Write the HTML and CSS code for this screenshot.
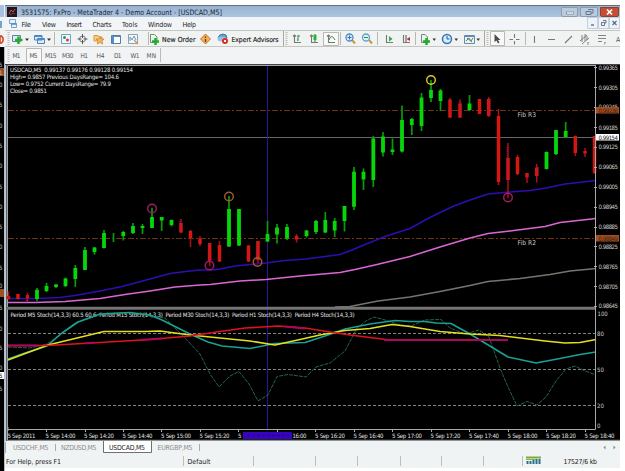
FILE: index.html
```html
<!DOCTYPE html>
<html lang="en">
<head>
<meta charset="utf-8">
<title>MetaTrader 4</title>
<link rel="stylesheet" href="styles.css">
</head>
<body>
<div class="screen">
  <div class="behind">
    <div class="behind-tools"><svg width="5" height="42" viewBox="0 5 5 42"><path d="M0 5H4V17H0" fill="#a9c1df"/><path d="M0 21H2V28H0" fill="#7d9fc4"/><path d="M0 36H1.500L3 38V41L1.500 43H0Z" fill="none" stroke="#d8391c" stroke-width="1.500"/></svg></div>
    <svg class="behind-chart" width="5" height="424" viewBox="0 47 5 424">
      <rect x="0" y="68" width="4" height="8" fill="#a14f22"/><rect x="0" y="289" width="4" height="8" fill="#a14f22"/><rect x="0" y="372" width="4" height="7" fill="#fff"/>
      <g class="behind-digits"><text y="67">5</text><text y="75">1</text><text y="87">0</text><text y="107">5</text><text y="128">0</text><text y="148">5</text><text y="168">0</text><text y="189">5</text><text y="209">0</text><text y="229">5</text><text y="249">0</text><text y="270">5</text><text y="288">0</text><text y="310">5</text><text y="331">0</text><text y="350">5</text><text y="370">0</text><text y="391">5</text></g>
      <text class="behind-now" y="378">5</text>
    </svg>
  </div>
  <div class="window">
    <header class="titlebar">
      <svg class="app-icon" width="10" height="10" viewBox="0 0 10 10"><rect width="10" height="10" fill="#26131d"/><path d="M2 7L4 3L6 5L8 2" stroke="#bd5a38" fill="none"/><path d="M3 8L6 6L8 7" stroke="#704052" fill="none"/></svg>
      <svg class="title-text" width="210" height="12"><text x="0" y="9" textLength="201" lengthAdjust="spacingAndGlyphs">3531575: FxPro - MetaTrader 4 - Demo Account - [USDCAD,M5]</text></svg>
      <div class="win-buttons"><span class="wb"><svg width="15" height="8"><rect x="4.500" y="4" width="7" height="2" fill="#fff" stroke="#66758c" stroke-width=".6"/></svg></span><span class="wb"><svg width="16" height="8"><path d="M7 1.500H12V5H10M5 3.500H10V6.500H5Z" fill="none" stroke="#68778c"/></svg></span><span class="wb close"><svg width="17" height="8"><path d="M6 1.500L11 6.500M11 1.500L6 6.500" stroke="#fff" stroke-width="1.700"/></svg></span></div>
    </header>
    <nav class="menubar">
      <svg width="582" height="13" viewBox="5 17 582 13">
        <path d="M9.500 19.500H15.500V23.500H9.500ZM11.500 23.500H16.500V27.500H11.500Z" fill="#e6f1fb" stroke="#7ba0c5"/><path d="M11 24H16.500" stroke="#5589bd" stroke-width="1.500"/>
        <g class="menu-text"><text x="21.500" y="26.500" textLength="9.500">File</text><text x="42" y="26.500" textLength="14">View</text><text x="66.500" y="26.500" textLength="15.500">Insert</text><text x="92.500" y="26.500" textLength="19">Charts</text><text x="122" y="26.500" textLength="15.500">Tools</text><text x="148" y="26.500" textLength="24">Window</text><text x="182.500" y="26.500" textLength="13.500">Help</text></g>
      </svg>
      <div class="mdi-buttons"><span class="mdi"><svg width="9" height="10"><path d="M3 7H6" stroke="#56677d" stroke-width="1.300"/></svg></span><span class="mdi"><svg width="9" height="10"><path d="M4 2.500H7V5H6M2.500 4.500H5.500V7.500H2.500Z" fill="none" stroke="#56677d" stroke-width=".9"/></svg></span><span class="mdi"><svg width="9" height="10"><path d="M2.500 3L6.500 7M6.500 3L2.500 7" stroke="#56677d" stroke-width="1.100"/></svg></span></div>
    </nav>
    <div class="toolbar">
      <svg width="615" height="17" viewBox="5 30 615 17">
        <path d="M8.500 32V45M286.500 32V45M487.500 32V45" stroke="#bdbdb9" stroke-width="2" stroke-dasharray="1 1"/>
        <path d="M54.500 32V45M148.500 32V45M340.500 32V45M377.500 32V45M415.500 32V45M525.500 32V45" stroke="#b7b7b3"/>
        <path d="M283.500 31V46M484.500 31V46" stroke="#aba99f"/>
        <path d="M323.500 45.500V32.500H338.500V45.500ZM490.500 45.500V31.500H504.500V45.500Z" fill="#f9f9f7" stroke="#b9b9b5"/>
        <path d="M12.500 35.500H20.500V41.500H12.500Z" fill="#dfebf6" stroke="#5e83ab"/><path d="M18.500 36.500V44M15 40H22.500" stroke="#22ac2b" stroke-width="2.500"/>
        <path d="M25 38.500H29L27 41ZM47 38.500H51L49 41ZM432.500 38.500H436L434.200 41ZM454.500 38.500H458L456.200 41ZM476.500 38.500H480L478.200 41Z" fill="#333"/>
        <path d="M34.500 35.500H42V40H34.500ZM37.500 38.500H44.500V43.500H37.500Z" fill="#dceafa" stroke="#4b84be"/><path d="M35 36.500H42M38 39.500H45" stroke="#4e8dcb"/>
        <path d="M61.500 34.500H70.500V43.500H61.500Z" fill="#edf6fb" stroke="#6ea1c8"/><circle cx="64.500" cy="37.500" r="1.500" fill="#2aa239"/><circle cx="67.500" cy="40" r="1.500" fill="#df3835"/>
        <circle cx="82.500" cy="39" r="3" fill="none" stroke="#777"/><path d="M82.500 34V38M82.500 40V44M77.500 39H81.500M83.500 39H87.500" stroke="#555"/>
        <path d="M94 35.500H98L99 37H102V41H94Z" fill="#f7cf7b" stroke="#d39a42"/><path d="M100 36.500L101.200 39H104L102 41L102.700 44L100 42.500L97.300 44L98 41L96 39H98.800Z" fill="#f7b35a" stroke="#c8812c" stroke-width=".7"/>
        <path d="M111.500 35.500H120.500V43.500H111.500Z" fill="#fff" stroke="#4e7eb2"/><path d="M112 36H120V37H112ZM112 37H114V43H112Z" fill="#5590cb"/>
        <path d="M128.500 34.500H137.500V43.500H128.500Z" fill="#f5f9fb" stroke="#86a3b9"/><path d="M130 41V37L132 40L134 36L136 40" fill="none" stroke="#7496ae"/><path d="M134 40L138 44" stroke="#c6a053" stroke-width="1.500"/>
        <path d="M150.500 34.500H154.500L157 37V42.500H150.500Z" fill="#eef3ee" stroke="#6f9170"/><path d="M155.500 38V45M152 41.500H159" stroke="#20ae2b" stroke-width="2.500"/>
        <path d="M205.500 34L210.500 39L205.500 44L200.500 39Z" fill="#f6ae5a" stroke="#c87926"/><path d="M205.500 36.500V38M205.500 39V42" stroke="#54401f" stroke-width="1.300"/>
        <path d="M218 38Q219 34 223 34Q227 34 227 38L223 41Z" fill="#5f9fd0" stroke="#437dad"/><ellipse cx="222" cy="39" rx="4.500" ry="2.500" fill="#94c1dd"/><circle cx="225" cy="41" r="3" fill="#dd2e20"/><path d="M224 40H226V42H224Z" fill="#fff"/>
        <g class="tool-text"><text x="162" y="41.500" textLength="33.500">New Order</text><text x="231.500" y="41.500" textLength="47">Expert Advisors</text></g>
        <g fill="none" stroke="#777" stroke-width="1.100"><path d="M294.500 35V42.500H301M311.500 35V42.500H318M328.500 35V42.500H335M386.500 35V42.500H393M403.500 35V42.500H410"/><path d="M293 36.500L294.500 35L296 36.500M310 36.500L311.500 35L313 36.500M327 36.500L328.500 35L330 36.500"/></g>
        <path d="M298 35V41M297 40H298M298 36H300" stroke="#318b42"/><path d="M315 34V42" stroke="#227e28"/><rect x="313.500" y="35" width="3" height="5" fill="#26b536"/><path d="M329 40Q331.500 33 335 40" fill="none" stroke="#41824d"/>
        <path d="M389 36L392.500 39L389 41.500Z" fill="#31a84a"/><path d="M406 35V42" stroke="#456"/><path d="M410 37L406.500 39L410 41Z" fill="#c22d27"/>
        <path d="M352 40L355 43.500M369 40L372 43.500" stroke="#c89a40" stroke-width="2"/><circle cx="349.500" cy="37.500" r="3.500" fill="#dcefff" stroke="#5089c3" stroke-width="1.300"/><circle cx="366" cy="37.500" r="3.500" fill="#dcefff" stroke="#68a0c0" stroke-width="1.300"/><path d="M347.500 37.500H351.500M349.500 35.500V39.500" stroke="#376fae"/><path d="M364 37.500H368" stroke="#22974a"/>
        <path d="M421.500 34.500H425L427.500 37V42.500H421.500Z" fill="#eef3f0" stroke="#6c8c75"/><path d="M426.500 38V45M423 41.500H430" stroke="#20aa2c" stroke-width="2.500"/>
        <circle cx="447" cy="39" r="4.500" fill="#d8ecff" stroke="#3475b4" stroke-width="1.500"/><path d="M447 36V39H449.500" fill="none" stroke="#235a91"/>
        <path d="M464.500 35.500H474.500V43.500H464.500Z" fill="#e7f2fa" stroke="#648daf"/><path d="M465 36.500H474" stroke="#568ac0"/><path d="M466 41L469 38L471 41L473 38" fill="none" stroke="#349b52"/><path d="M467 38L472 42" stroke="#ca6349"/>
        <path d="M494.500 34V42L496.500 40.500L498 43.500L499.500 42.500L498 40H500.500Z" fill="#4c4c50"/>
        <g fill="none" stroke="#777" stroke-width="1.100"><path d="M514.500 34V38M514.500 41V44.500M509.500 39.500H513M516 39.500H519.500M534.500 36V43M548 39.500H555M565 43L572 36"/><path d="M580 41L587 35M582 44L589 38M582 35V42M585 34V41M587 36V40M598 35.500H606M598 38.500H606M598 41.500H602" stroke-width=".9"/></g>
        <g class="glyph"><text x="587" y="45">E</text><text x="604" y="45">F</text></g><text class="letter-tool" x="616" y="42">A</text>
      </svg>
    </div>
    <div class="timeframes">
      <svg width="615" height="17" viewBox="5 47 615 17"><path d="M8.500 49V62" stroke="#c1c1be" stroke-width="2" stroke-dasharray="1 1"/><path d="M26.500 62V48.500H41.500V62" fill="#f8f8f6" stroke="#b7b7b3"/><path d="M160.500 48V62" stroke="#bbb"/>
      <g><text x="12.500" y="57.500" textLength="8">M1</text><text x="29.500" y="57.500" textLength="8">M5</text><text x="45" y="57.500" textLength="11.500">M15</text><text x="62" y="57.500" textLength="11.500">M30</text><text x="80.500" y="57.500" textLength="7.500">H1</text><text x="96.500" y="57.500" textLength="8">H4</text><text x="114" y="57.500" textLength="7.500">D1</text><text x="130.500" y="57.500" textLength="9">W1</text><text x="146.500" y="57.500" textLength="9.500">MN</text></g></svg>
    </div>
    <main class="chart">
      <svg width="615" height="377" viewBox="5 64 615 377">
        <rect x="5" y="64" width="615" height="377" fill="#000"/>
        <path d="M5.500 64V441" stroke="#b7c5d3" stroke-width="2"/><path d="M5 64H620" stroke="#464249" stroke-width="2"/><path d="M7.500 440V65.500H595.500" fill="none" stroke="#a4a4a4"/>
        <path d="M8 110.500H595M8 238.500H595" stroke="#6b3415" stroke-dasharray="6 2 2 2"/><path d="M8 137.500H595" stroke="#66666e"/>
        <path d="M267.500 66V307M267.500 310V429" stroke="#2b139c"/>
        <g fill="none" stroke-width="1.500" stroke-linejoin="round">
          <path stroke="#2f0db4" d="M8 298.500H37L60 297.500L75 295.500L100 291L122 286.500L150 279L170 273.500L190 271L200 270H213L220 269L235 266L266 263L285 260.500L306 259L340 254.500L352 250L365 244.500L385 236.500L410 228.500L427 219L440 212.500L455 205.500L470 200L488 194L510 192L530 190.500L546 188L565 184L596 180.500"/>
          <path stroke="#d967d5" d="M8 302.500H35L65 301.500L100 298.500L125 294.500L150 291L175 287L200 285L210 284.500L240 281L266 279.500L300 276L340 272.500L355 269.500L377 264.500L410 256.500L440 247L470 238L488 233.500L510 231L545 226.500L560 222.500L596 218.500"/>
          <path stroke="#75756e" d="M335 307L350 306.500L378 301L410 297L440 291.500L470 285.500L488 281.500L520 278.500L550 274.500L570 271L596 268.500"/>
        </g>
        <path class="up-wick" d="M37 288V301M46.500 283V292M56 284V288M65.500 277.500V287M75.300 265V287M85 247V270M94.500 247V254.700M104 230V248.500M113.500 233V242M123.300 231V240.500M133 223V234M142.500 224V234M152 208V228M161.700 217V231M171.500 219.500V226.500M229 196V247M239 209V246M267.500 221V242M277 224V243.500M287 224V240M306.500 230V237.500M316 220V234M325.300 212V233M334.700 218V237M344.500 206V231.500M354 167V210M363.500 168.500V190M373.300 136V187M383 132V156.500M392.500 138.500V155M402 105.500V152.500M411.800 118V135M421.500 93V131M431 80V102M440.500 89V111M469.500 95V111M546.500 151.500V169.500M556 130V155M565.700 122V138"/>
        <path class="up-body" d="M37 289.700V299M46.500 286V291M56 284.500V287M65.500 278.500V286M75.300 268V279M85 250V270M94.500 247.500V252M104 233V248M123.300 232V236M133 226V233M142.500 226V228M152 217V228M161.700 217V220.500M171.500 220V225M229 209V246.500M239 209V245.500M267.500 234V241.500M277 227.500V234.500M287 227V238.500M306.500 230.500V236M316 221V232M325.300 220V232.500M334.700 221V230.500M344.500 206V221M354 171.700V206.700M363.500 171.700V179.500M373.300 138.500V180M383 136.500V152.500M392.500 149.500V152M402 120V151.500M411.800 119V125M421.500 97.500V126M431 90V98M440.500 90.500V101M469.500 103.500V110M546.500 152V169M556 130V154M565.700 131V137"/>
        <path class="down-wick" d="M8.500 291.500V300M18 294V299.500M27.500 293V302M181 219V233M190.500 230V247M200 236V246M209.700 243V266M219.500 241V262M248.500 245V262M258 241V263M296.500 234V242.500M450 98V118M460 99.500V118M479.500 99V114M488.700 97V117M498.500 109V185M508 143V198M517.500 155V175M527 173V183M536.700 164V182.500M575.300 135.500V156M585 148V157M594.500 136V174"/>
        <path class="down-body" d="M8.500 296V299M18 294V299M27.500 295V298M181 223V232.500M190.500 231V238M200 238.500V244M209.700 243V260.500M219.500 245V261.500M248.500 245.500V261.500M258 241V260M296.500 236V239.500M450 99.500V117.500M460 103.500V117.500M479.500 99V114M488.700 99V116M498.500 116V182M508 158V180M517.500 157V174M527 173V177.500M536.700 167.500V176M575.300 136V153M585 151V153.500M594.500 136V173"/>
        <path d="M26.500 296V301M208.300 244V261M256.500 242V259M179.800 221V230M461 102V114M490 99V115M507 147V181M538 167V176" stroke="#a91362" stroke-dasharray="1 1"/>
        <g fill="none" stroke-width="1.400"><circle cx="152" cy="208.500" r="4.300" stroke="#a91964"/><circle cx="209.500" cy="265.500" r="4.300" stroke="#a91964"/><circle cx="508" cy="197.500" r="4.300" stroke="#a91964"/><circle cx="229" cy="196.500" r="4.300" stroke="#a65a24"/><circle cx="257.500" cy="262" r="4.300" stroke="#a65a24"/><circle cx="431" cy="80" r="4.300" stroke="#e2ce16"/></g>
        <g class="chart-text"><text x="10" y="72" textLength="123">USDCAD,M5&#160; 0.99137 0.99176 0.99128 0.99154</text><text x="10" y="78.500" textLength="109">High= 0.9857 Previous DaysRange= 104.6</text><text x="10" y="85.500" textLength="101">Low= 0.9752 Current DaysRange= 79.9</text><text x="10" y="92.500" textLength="37">Close= 0.9851</text></g>
        <g class="fib"><text x="517.500" y="116.800" textLength="18.500">Fib R3</text><text x="517.500" y="244.800" textLength="18.500">Fib R2</text></g>
        <path d="M8 333.500H595M8 369.500H595M8 405.500H595" stroke="#84847e" stroke-dasharray="3 2"/>
        <g class="chart-text"><text x="10.500" y="317" textLength="344">Period M5 Stoch(14,3,3) 60.5 60.6&#160; Period M15 Stoch(14,3,3)&#160; Period M30 Stoch(14,3,3)&#160; Period H1 Stoch(14,3,3)&#160; Period H4 Stoch(14,3,3)</text></g>
        <g fill="none" stroke-linejoin="round">
          <path stroke="#24654a" stroke-dasharray="4 1" d="M8 347L30 348L47 344L75 323L100 315L130 312.500L145 315L165 318L185 338L200 354L210 374L219 387L230 376L239 371.500L249 384L258 401L268 395L277 376.500L288 374.500L306 377L316 367L330 363L345 351L357 328L366 321L374 317L385 320L400 325L411 326L425 320L441 319.500L450 328L465 334L479 330L489 337L500 368L508 387L517 406L527 401.500L537 405L546 397L556 381L566 369L575 366L585 371L596 375"/>
          <g stroke-width="1.600"><path stroke="#1aa194" d="M8 359L25 353L47 346L62 333L78 322L100 314L130 312.500L150 315L162 320L190 334L208 342L222 346L250 348.500L275 343.500L305 342.500L325 336L345 329L370 324L395 320.500L410 321.500L425 321.500L436 323L451 323.500L470 334L508 357L536 363L560 358.500L580 354.500L596 352"/>
          <path stroke="#e2df20" d="M8 360L48 345L104 331.500H145L160 331L190 335L210 337L230 339L250 341L275 345L300 339.500L320 335L345 330.500L370 328.500L392 324.500L410 326.500L440 331.500L470 334L500 335.500L545 341L565 343L580 342.500L596 339.500"/>
          <path stroke="#df1320" d="M8 345.500H47L100 342.500L150 339.500L190 336L220 331.500L245 328L278 326L305 328L330 332L350 335L390 340"/><path stroke="#ad075c" stroke-width="2" d="M8 345.500H38M85 343.300L94 342.800M140 340L162 338.500M285 326.500L305 328.500M384 340H508"/></g>
        </g>
        <path d="M7 308.300H595.500" stroke="#747474" stroke-width="3"/>
        <path d="M8 429.500H595.500V65" fill="none" stroke="#a8a8a6"/>
        <path d="M8 427V431M46.500 429V432M85.500 429V432M123.500 429V432M161.500 429V432M200.500 429V432M238.500 429V432M277.500 429V432M315.500 429V432M354.500 429V432M392.500 429V432M431.500 429V432M469.500 429V432M508.500 429V432M546.500 429V432M585.500 429V432" stroke="#aaa"/>
        <path d="M594 67.500H597M594 87.500H597M594 107.500H597M594 127.500H597M594 147.500H597M594 167.500H597M594 187.500H597M594 207.500H597M594 227.500H597M594 246.500H597M594 266.500H597M594 286.500H597M594 306.500H597" stroke="#aaa"/>
        <g class="scale-text"><text x="598.500" y="69.500" textLength="19.500">0.99365</text><text x="598.500" y="89.500" textLength="19.500">0.99305</text><text x="598.500" y="109" textLength="19.500">0.99245</text><text x="598.500" y="129.500" textLength="19.500">0.99185</text><text x="598.500" y="149" textLength="19.500">0.99125</text><text x="598.500" y="169" textLength="19.500">0.99065</text><text x="598.500" y="189" textLength="19.500">0.99005</text><text x="598.500" y="209" textLength="19.500">0.98945</text><text x="598.500" y="229" textLength="19.500">0.98885</text><text x="598.500" y="248.500" textLength="19.500">0.98825</text><text x="598.500" y="268.500" textLength="19.500">0.98765</text><text x="598.500" y="288.500" textLength="19.500">0.98705</text><text x="598.500" y="308" textLength="19.500">0.98645</text><text x="597.500" y="316">100</text><text x="597" y="336">80</text><text x="597" y="372">50</text><text x="597" y="408">20</text><text x="597" y="428">0</text></g>
        <rect x="596" y="107" width="23" height="6.500" fill="#a34d1e"/><rect x="596" y="235" width="23" height="6.500" fill="#a34d1e"/><rect x="596" y="134" width="23" height="6.500" fill="#fff"/>
        <g class="badge-text"><text x="598.500" y="112.800" textLength="19.500">0.99236</text><text x="598.500" y="139.500" textLength="19.500" class="now">0.99154</text><text x="598.500" y="240.700" textLength="19.500">0.98849</text></g>
        <g class="chart-text"><text x="7.500" y="437.500" textLength="28">5 Sep 2011</text><text x="45.500" y="437.500" textLength="30">5 Sep 14:00</text><text x="84" y="437.500" textLength="30">5 Sep 14:20</text><text x="122.500" y="437.500" textLength="30">5 Sep 14:40</text><text x="161" y="437.500" textLength="30">5 Sep 15:00</text><text x="199.500" y="437.500" textLength="30">5 Sep 15:20</text><text x="238" y="437.500">5</text><text x="292.500" y="437.500" textLength="14">16:00</text><text x="315" y="437.500" textLength="30">5 Sep 16:20</text><text x="353.500" y="437.500" textLength="30">5 Sep 16:40</text><text x="392" y="437.500" textLength="30">5 Sep 17:00</text><text x="430.500" y="437.500" textLength="30">5 Sep 17:20</text><text x="469" y="437.500" textLength="30">5 Sep 17:40</text><text x="507.500" y="437.500" textLength="30">5 Sep 18:00</text><text x="546" y="437.500" textLength="30">5 Sep 18:20</text><text x="584.500" y="437.500" textLength="30">5 Sep 18:40</text></g>
        <rect x="243" y="432" width="49" height="7" fill="#3504bc"/><path d="M247 435.500H289" stroke="#25038f" stroke-dasharray="3 2"/>
        <path d="M7 440.500H620" stroke="#8a9494" stroke-width="1.500"/>
      </svg>
    </main>
    <div class="tabs">
      <svg width="615" height="13" viewBox="5 441 615 13"><path d="M5.500 442V453M55.500 444V451M199.500 444V451" stroke="#aaa"/><path d="M103.500 441V452.500H151.500V441" fill="#fff" stroke="#6f6f6f"/>
      <g class="tab-text"><text x="13" y="449.500" textLength="35.500">USDCHF,M5</text><text x="61" y="449.500" textLength="35.500">NZDUSD,M5</text><text x="157.500" y="449.500" textLength="35">EURGBP,M5</text></g><text class="tab-active" x="109" y="449.500" textLength="36">USDCAD,M5</text><path d="M605.500 445.500L603.500 447.500L605.500 449.500ZM613.500 445.500L615.500 447.500L613.500 449.500Z" fill="#888"/></svg>
    </div>
    <footer class="status">
      <svg width="615" height="14" viewBox="5 454 615 14"><path d="M183.500 456V466M253.500 456V466M315.500 456V466M357.500 456V466M400.500 456V466M441.500 456V466M483.500 456V466M522.500 456V466" stroke="#c0beb7"/>
      <g><text x="6" y="463.500" textLength="55">For Help, press F1</text><text x="187.500" y="463.500" textLength="23">Default</text><text x="563.500" y="463.500" textLength="33.500">17527/6 kb</text></g><path d="M526 457.500H541" stroke="#84a83d" stroke-width="2"/><path d="M527.500 461V464M530.500 461V464M533.500 460V464M536.500 459V464M539.500 459V464" stroke="#287188" stroke-width="2"/><path d="M526 459.500H536" stroke="#8db543"/></svg>
    </footer>
  </div>
</div>
</body>
</html>
```

FILE: styles.css
```css
* { box-sizing: border-box; }
body {
  margin: 0;
  background: #fff;
  font-family: "DejaVu Sans Condensed", "DejaVu Sans", sans-serif;
}
svg { display: block; flex-shrink: 0; }
text { font-family: "DejaVu Sans Condensed", "DejaVu Sans", sans-serif; }
.screen {
  width: 620px;
  height: 471px;
  padding-top: 5px;
  display: flex;
  overflow: hidden;
}
.behind { width: 5px; background: #dbe5ef; }
.behind-tools { height: 42px; background: #f0f3f3; }
.behind-chart { background: linear-gradient(90deg, #000 4px, #b2bdc9 4px); }
.behind-digits { font-size: 6px; fill: #b4c4cb; }
.behind-digits text, .behind-now { transform: translateX(-1px); }
.behind-now { font-size: 6px; fill: #111; }
.window { width: 615px; display: flex; flex-direction: column; }
.titlebar {
  height: 12px;
  display: flex;
  align-items: center;
  padding-left: 2px;
  border-top: 1px solid #64717e;
  background: linear-gradient(#98b2d2, #abc4de);
}
.title-text { margin-left: 4px; font-size: 7.4px; fill: #1d2733; }
.win-buttons { margin-left: auto; display: flex; gap: 2px; padding-right: 1px; }
.wb {
  height: 10px;
  border: 1px solid #8e9cad;
  border-radius: 0 0 2px 2px;
  background: #bacbdd;
}
.close { background: #c54e35; border-color: #8b4135; }
.menubar {
  height: 13px;
  display: flex;
  background: #f2f5f7;
}
.menu-text { font-size: 7px; fill: #222; }
.mdi-buttons { display: flex; }
.mdi { width: 11px; height: 12px; border: 1px solid #c3d1de; background: #edf3f9; }
.toolbar {
  height: 17px;
  background: #f1f3f3;
  border-top: 1px solid #c5c5c1;
  border-bottom: 1px solid #c5c5c1;
  overflow: hidden;
}
.toolbar svg { margin-top: -1px; }
.tool-text { font-size: 6.9px; fill: #222; stroke: #222; stroke-width: .15; }
.glyph { font-size: 4px; fill: #555; }
.letter-tool { font-size: 7px; fill: #555; }
.timeframes { height: 17px; background: #f1f3f4; font-size: 6.5px; fill: #555; }
.chart { height: 377px; background: #000; }
.up-wick, .up-body { fill: none; }
.up-wick { stroke-width: 1.7; stroke: #079a0c; }
.up-body { stroke-width: 3.8; stroke: #06d60a; }
.down-wick, .down-body { fill: none; }
.down-wick { stroke-width: 1.5; stroke: #b00e20; }
.down-body { stroke-width: 3.5; stroke: #d41711; }
.chart-text { font-size: 6px; fill: #e4e4e4; }
.fib { font-size: 6.6px; fill: #c9c9c9; }
.scale-text { font-size: 6px; fill: #cfcfcf; }
.badge-text { font-size: 6px; fill: #401d11; }
.badge-text .now { fill: #111; }
.tabs { height: 13px; background: #f0f3f4; }
.tab-text { font-size: 6.9px; fill: #8c8c8c; }
.tab-active { font-size: 6.9px; fill: #222; }
.status { height: 14px; background: #f0f3f4; font-size: 6.9px; fill: #181818; }
```
